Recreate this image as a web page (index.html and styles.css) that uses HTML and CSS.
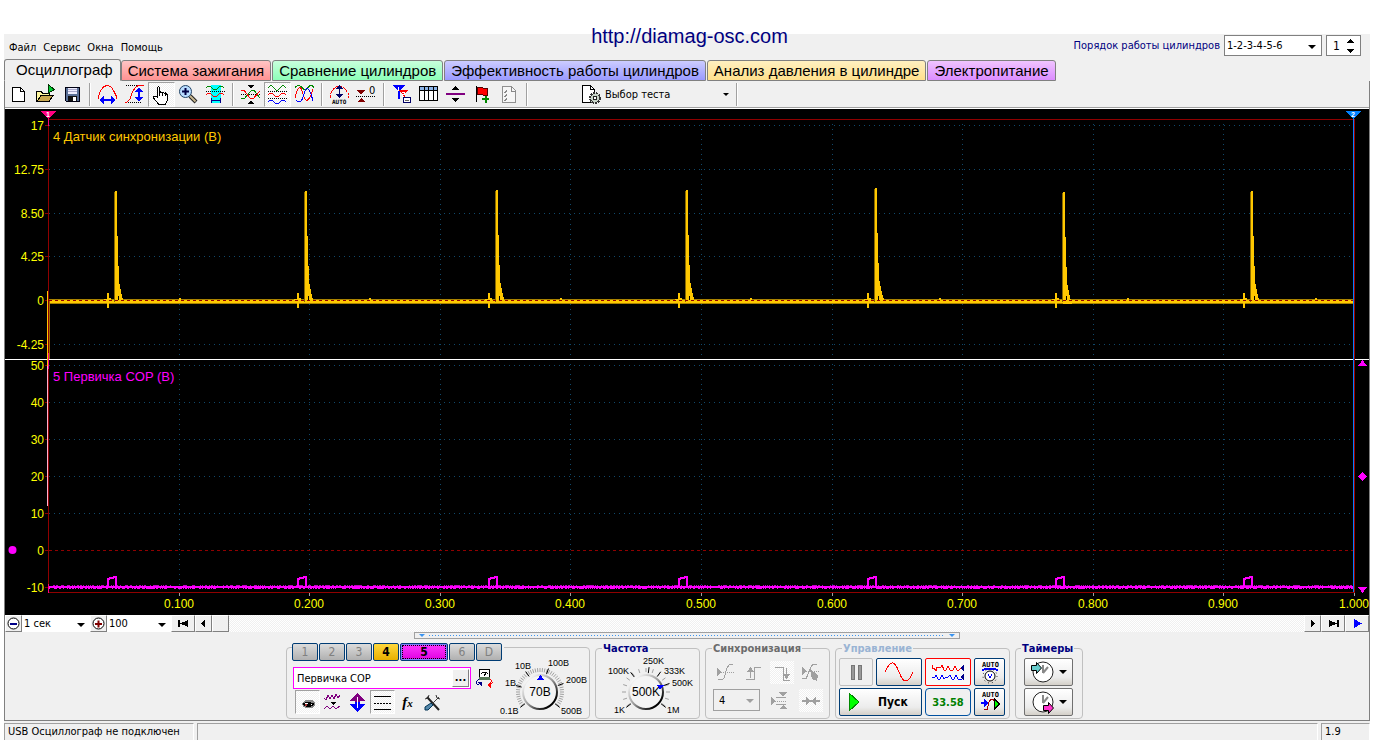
FILE: index.html
```html
<!DOCTYPE html>
<html lang="ru">
<head>
<meta charset="utf-8">
<title>USB Осциллограф</title>
<link rel="stylesheet" href="styles.css">
</head>
<body>
<div class="app">
  <header class="header">
    <nav class="menu">
      <button>Файл</button><button>Сервис</button><button>Окна</button><button>Помощь</button>
    </nav>
    <a class="site" href="http://diamag-osc.com">http://diamag-osc.com</a>
    <div class="order">
      <label for="order">Порядок работы цилиндров</label>
      <span class="combo order-combo"><select id="order"><option>1-2-3-4-5-6</option></select></span>
      <span class="spin"><input id="cyl" type="text" value="1" aria-label="Цилиндр"><svg width="8" height="14" viewBox="0 0 8 14"><path d="M0 4h8L4 0zM0 10h8l-4 4z"/></svg></span>
    </div>
  </header>

  <nav class="tabs">
    <button class="tab active">Осциллограф</button>
    <button class="tab red">Система зажигания</button>
    <button class="tab green">Сравнение цилиндров</button>
    <button class="tab blue">Эффективность работы цилиндров</button>
    <button class="tab yellow">Анализ давления в цилиндре</button>
    <button class="tab pink">Электропитание</button>
  </nav>

  <main class="frame">
    <div class="toolbar">
      <button class="tool" aria-label="Новый"><svg viewBox="0 0 21 21"><path d="M4.500 3.500h8l4 4v10h-12z" fill="#fff" stroke="#000"/><path d="M12.500 3.500v4h4" fill="none" stroke="#000"/></svg></button>
      <button class="tool" aria-label="Открыть"><svg viewBox="0 0 21 21"><path d="M1.500 17.500v-10h5l1 2h7v3" fill="#fdf6a0" stroke="#000"/><path d="M2 17.500l4-6h12l-4 6z" fill="#c8a850" stroke="#000"/><path d="M13.500 9V1l6 4.500z" fill="#0c3" stroke="#030"/></svg></button>
      <button class="tool" aria-label="Сохранить"><svg viewBox="0 0 21 21"><path d="M3.500 3.500h14v14h-13l-1-1z" fill="#5a7096" stroke="#001"/><path d="M6 4h9v6H6z" fill="#eef"/><path d="M6 5h9M6 7h9" stroke="#aac" stroke-width="1"/><path d="M6 12h9v5H6z" fill="#111"/><path d="M11 13h3v4h-3z" fill="#fff"/></svg></button>
      <span class="sep"></span>
      <button class="tool" aria-label="Период"><svg viewBox="0 0 21 21"><path d="M1.500 15v-3l2-5 3-4 3-1.500h2l3 2 2 3 2.500 5v3.500" fill="none" stroke="red"/><path d="M4 16h13" stroke="#00f" stroke-width="2"/><path d="M7 12v8l-5-4zM14 12v8l5-4z" fill="#00f"/></svg></button>
      <button class="tool" aria-label="Амплитуда"><svg viewBox="0 0 21 21"><path d="M2 1.500h18M2 18.500h16" stroke="#000" stroke-dasharray="1 1"/><path d="M1 18h2l3-3 2-6 3-5 3-2.500h6" fill="none" stroke="red"/><path d="M15 5v11" stroke="#00f" stroke-width="2"/><path d="M11 8h8l-4-5zM11 13h8l-4 5z" fill="#00f"/></svg></button>
      <button class="tool pressed" aria-label="Рука"><svg viewBox="0 0 21 21"><path d="M6.500 13V3.500l1-1 1 1V9l1-1 1.500 1 1-.5 1.500 1 1-.5 2 2v5l-2 4h-7l-5-6v-2h2z" fill="#fff" stroke="#000"/><path d="M8.500 9v3M11.500 9v3M14.500 10v2" stroke="#000"/></svg></button>
      <button class="tool" aria-label="Масштаб"><svg class="smooth" viewBox="0 0 21 21"><path d="M12 12l6 6" stroke="#222" stroke-width="4"/><path d="M12 12l5.500 5.500" stroke="#c8b890" stroke-width="2"/><circle cx="7.500" cy="7.500" r="6" fill="#b8dcff" stroke="#246"/><path d="M4 7.500h7M7.500 4v7" stroke="#004" stroke-width="2"/></svg></button>
      <button class="tool" aria-label="Участок"><svg viewBox="0 0 21 21"><path d="M6 1h10v18H6z" fill="#0ff"/><path d="M1 4q3-4 6 0t6 0 6 0" fill="none" stroke="#080"/><path d="M1 7.500h19" stroke="#000" stroke-dasharray="1 1"/><path d="M1 11q3-4 6 0t6 0 6 0" fill="none" stroke="red"/><path d="M6.500 14v5M15.500 14v5M7 16.500h8" stroke="#008"/></svg></button>
      <span class="sep"></span>
      <button class="tool" aria-label="Совместить"><svg viewBox="0 0 21 21"><path d="M7 1h7l-3.500 3.500zM7 20h7l-3.500-3.500z"/><path d="M1 10.500h19" stroke="#000" stroke-dasharray="1 1"/><path d="M1 14l3 1 7-8 3-1 6 8" fill="none" stroke="#080"/><path d="M1 7l3-1 6 8 3 1 7-8" fill="none" stroke="red"/></svg></button>
      <button class="tool pressed" aria-label="Раздельно"><svg viewBox="0 0 21 21"><path d="M1 4q3-5 6 0t6 0 6 0" fill="none" stroke="#080"/><path d="M1 7.500h19M1 14.500h19" stroke="#000" stroke-dasharray="1 1"/><path d="M1 11q3-4 6 0t6 0 6 0" fill="none" stroke="red"/><path d="M1 18q3-4 6 0t6 0 6 0" fill="none" stroke="#00f"/></svg></button>
      <button class="tool" aria-label="Наложить"><svg viewBox="0 0 21 21"><path d="M1 3.500q4-4 7 0t6 0 6 0" fill="none" stroke="#080"/><path d="M1 14c3-13 6-13 8-4s6 9 10-5" fill="none" stroke="red"/><path d="M2 16c3 4 6 2 8-6s5-9 9 7" fill="none" stroke="#00f"/></svg></button>
      <span class="sep"></span>
      <button class="tool" aria-label="Авто"><svg viewBox="0 0 21 21"><path d="M1.500 14v-4l3-5 4-3h4l4 3 3 5v4" fill="none" stroke="red" stroke-dasharray="3 1"/><path d="M10.500 3v9" stroke="#006" stroke-width="1"/><path d="M7 5h7l-3.500-4zM7 10h7l-3.500 4z" fill="#006"/><text x="3" y="20" class="tiny">AUTO</text></svg></button>
      <button class="tool" aria-label="Ноль"><svg viewBox="0 0 21 21"><path d="M1 6h8l-4 5zM1 18h8l-4-4z" fill="#800000"/><path d="M0 12.500h20" stroke="#000" stroke-dasharray="1 1"/><text x="13" y="10" class="digit">0</text></svg></button>
      <span class="sep"></span>
      <button class="tool" aria-label="Фильтр"><svg viewBox="0 0 21 21"><path d="M1 1h13L9 7v8H7V7z" fill="#00f"/><path d="M8 6h9l-3 4v6h-2v-5z" fill="red"/><path d="M7.500 3v4M11 8h2v2h-2v2h2" stroke="#fff" fill="none"/><path d="M12.500 13.500h7v5h-7z" fill="#fff" stroke="#006"/><path d="M14 16.500h4" stroke="#666"/></svg></button>
      <button class="tool" aria-label="Таблица"><svg viewBox="0 0 21 21"><path d="M1.500 2.500h18v14h-18z" fill="#fff" stroke="#000"/><path d="M2 3h17v3H2z" fill="#8cb4e8"/><path d="M1 6.500h19M6.500 3v13M10.500 3v13M15.500 3v13" stroke="#000"/></svg></button>
      <button class="tool" aria-label="Разделитель"><svg viewBox="0 0 21 21"><path d="M1 9h19v2H1z" fill="#800080"/><path d="M7 6h7l-3.500-4zM7 14h7l-3.500 4z"/></svg></button>
      <button class="tool" aria-label="Маркер"><svg viewBox="0 0 21 21"><path d="M4.500 2v16" stroke="#000"/><path d="M5 3h4l2 1h4v7h-4l-2-1H5z" fill="red" stroke="#500"/><path d="M10 15h7M13.500 12v7" stroke="#080" stroke-width="2"/></svg></button>
      <button class="tool" aria-label="Отчёт"><svg viewBox="0 0 21 21"><path d="M3.500 2.500h9l4 4v12h-13z" fill="#f6f6f6" stroke="#909090"/><path d="M5 8l1 1 2-3M5 12l1 1 2-3M5 16l1 1 2-3M12.500 3v4h4" stroke="#888" fill="none"/></svg></button>
      <span class="sep"></span>
      <button class="test">
        <svg viewBox="0 0 22 22"><path d="M2.500 1.500h8l4 4v13h-12z" fill="#fff" stroke="#000"/><path d="M10.500 1.500v4h4" fill="none" stroke="#000"/><circle cx="15" cy="14" r="5" fill="#c8d4c8" stroke="#333" stroke-width="2" stroke-dasharray="2 1"/><circle cx="15" cy="14" r="2" fill="#fff" stroke="#222"/></svg>
        <span>Выбор теста</span><i class="arrow"></i>
      </button>
      <span class="sep"></span>
    </div>

    <svg class="plot" viewBox="5 109 1364 506" role="img" aria-label="Осциллограммы">
      <g id="grid"></g>
      <path class="axis" d="M48.500 119v474M48 119.500h1307M1354.500 119v474M48 592.500h1307"/>
      <g id="traces"></g>
      <path class="zero" d="M49 300.500h1304M49 550.500h1304"/>
      <g id="labels"></g>
      <path class="divider" d="M5 359.500h1364"/>
      <path d="M1353.500 115v477" stroke="#0080ff"/>
      <path d="M1354.500 119v474" stroke="#a00000"/>
      <path d="M47.500 291v83" stroke="#ffc800"/><path d="M47.500 366v140" stroke="#ffb0d0"/>
      <path d="M48.500 115v11M48.500 353v16M48.500 584v9" stroke="#ff0080"/>
      <path d="M41 111h15l-7.500 8z" fill="#ff0080"/><path d="M1346 111h15l-7.500 8z" fill="#0080ff"/>
      <text class="flag" x="48" y="117">1</text><text class="flag" x="1353" y="117">2</text>
      <text class="name yellow-text" x="53" y="141">4 Датчик синхронизации (В)</text>
      <text class="name pink-text" x="53" y="381">5 Первичка COP (В)</text>
      <g fill="#f0f"><circle class="smooth" cx="12.500" cy="550" r="4"/><path d="M1358 366h9l-4.500-6zM1358 587h9l-4.500 6zM1358 476.500l4.500-4.500 4.500 4.500-4.500 4.500z"/></g>
    </svg>

    <div class="scroll">
      <button class="flat w17" aria-label="Меньше"><svg class="smooth" viewBox="0 0 13 13"><circle cx="6.500" cy="6.500" r="5.500" fill="#fff" stroke="#000"/><path d="M3 6h7v2H3z" fill="#008"/></svg></button>
      <span class="combo time"><select aria-label="Развёртка"><option>1 сек</option></select></span>
      <button class="flat w17" aria-label="Больше"><svg class="smooth" viewBox="0 0 13 13"><circle cx="6.500" cy="6.500" r="5.500" fill="#fff" stroke="#000"/><path d="M3 6h7v2H3zM5.500 3.500h2v7h-2z" fill="#800000"/></svg></button>
      <span class="combo scale"><select aria-label="Масштаб"><option>100</option></select></span>
      <button class="flat w24" aria-label="В начало"><svg viewBox="0 0 13 13"><path d="M1 3h2v7H1zM11 3v7L3 6.500z"/></svg></button>
      <button class="flat w17" aria-label="Назад"><svg viewBox="0 0 13 13"><path d="M8 3v7L4 6.500z"/></svg></button>
      <div class="track"><span class="thumb"></span></div>
      <button class="flat w17" aria-label="Вперёд"><svg viewBox="0 0 13 13"><path d="M5 3v7l4-3.500z"/></svg></button>
      <button class="flat w24" aria-label="В конец"><svg viewBox="0 0 13 13"><path d="M10 3h2v7h-2zM2 3v7l8-3.500z"/></svg></button>
      <button class="flat w24" aria-label="Воспроизвести"><svg viewBox="0 0 13 13"><path d="M3 2v9l8-4.500z" fill="#00f"/></svg></button>
    </div>

    <section class="controls">
      <div class="splitter"><i></i><span></span><i></i></div>
      <div class="groups">
        <div class="group channel">
          <div class="left">
            <div class="channels">
              <button>1</button><button>2</button><button>3</button><button class="c4">4</button><button class="c5">5</button><button>6</button><button>D</button>
            </div>
            <div class="row name-row">
              <span class="name-box"><input type="text" value="Первичка COP" aria-label="Имя канала"><button>...</button></span>
              <svg width="20" height="20" viewBox="0 0 20 20"><path d="M4.500 1.500h10v8h-10z" fill="#fff" stroke="#000"/><path d="M4 9h11v3H4z" fill="#575"/><path d="M6 6l2-2h3l2 2M9 8l2-3" stroke="#000" fill="none"/><path d="M4 11q-5 4 0 6" stroke="#008" fill="none"/><path d="M15 11q5 4-1 6" stroke="red" fill="none"/><path d="M3 14h4v5z" fill="#008"/><path d="M16 14l-4 3 4 3z" fill="red"/></svg>
            </div>
            <div class="row tools">
              <button class="tool pressed" aria-label="Показать"><svg viewBox="0 0 21 21"><path d="M5 11l4-3h6l3 3v3l-3 2H9l-3-1z" fill="#888"/><path d="M6 12q5-3 11 0-4 4-8 2z" fill="#fff" stroke="#000"/><circle cx="12" cy="13" r="2"/><circle cx="9" cy="13" r="1" fill="#a33"/></svg></button>
              <button class="tool" aria-label="Фильтр"><svg viewBox="0 0 21 21"><path d="M2 6l2 2 2-5 2 4 2-4 2 4 2-5 2 4 2-3" stroke="#800080" fill="none"/><path d="M8 10h6l-3 3z"/><path d="M2 17l3-3 3 3 3-3 3 3 4-3" stroke="#800080" fill="none"/></svg></button>
              <button class="tool" aria-label="Смещение"><svg viewBox="0 0 21 21"><path d="M3 9l7.500-8L18 9h-5v2H8V9z" fill="#800080"/><path d="M3 12l7.500 8 7.500-8h-5v-2H8v2z" fill="#00f"/><path d="M10.500 5v11" stroke="#fff"/></svg></button>
              <button class="tool pressed" aria-label="Линии"><svg viewBox="0 0 21 21"><path d="M2 4.500h17M2 17.500h17" stroke="#000"/><path d="M2 11.500h17" stroke="#000" stroke-dasharray="2 1"/></svg></button>
              <button class="tool fx" aria-label="Функция"><i>f<small>x</small></i></button>
              <button class="tool" aria-label="Настройка"><svg class="smooth" viewBox="0 0 21 21"><path d="M5 5l12 13" stroke="#222" stroke-width="2"/><path d="M17 5l-8 8" stroke="#444" stroke-width="1"/><path d="M3 7l3-1 1-3M14 3l1 3 3 1" stroke="#333" fill="none"/><path d="M9 11l2 2-5 5H3v-3z" fill="#58a" stroke="#035"/></svg></button>
            </div>
          </div>
          <svg class="dial" id="volts" width="94" height="66" viewBox="497 652 94 66" role="slider" aria-label="Диапазон" aria-valuenow="70"></svg>
        </div>

        <fieldset class="group freq"><legend>Частота</legend>
          <svg class="dial" id="freq" width="98" height="64" viewBox="598 652 98 64" role="slider" aria-label="Частота" aria-valuenow="500"></svg>
        </fieldset>

        <fieldset class="group sync"><legend class="gray">Синхронизация</legend>
          <div class="sync-row">
            <button class="tool" disabled aria-label="Уровень"><svg viewBox="0 0 21 21" class="dim"><path d="M2 6l5 4-5 4z" class="fill"/><path d="M6 10.500h14" stroke-dasharray="1 1"/><path d="M3 17l4 1 2-2 3-10 2-3 4-1"/></svg></button>
            <button class="tool" disabled aria-label="Фронт"><svg viewBox="0 0 21 21" class="dim"><path d="M3 17.500h8v-12h7M7.500 16V8"/><path d="M4 10h7L7.500 5z" class="fill"/></svg></button>
            <button class="tool checked" disabled aria-label="Спад"><svg viewBox="0 0 21 21" class="dim"><path d="M3 5.500h8v13h7M14.500 6v9"/><path d="M11 12h7l-3.500 5z" class="fill"/></svg></button>
            <button class="tool" disabled aria-label="Ручной"><svg viewBox="0 0 21 21" class="dim"><path d="M2 5l5 4-5 4z" class="fill"/><path d="M6 9.500h14" stroke-dasharray="1 1"/><path d="M2 16l4 1 4-10 3-5h4"/><path d="M10 7l8 6-1 6-5-2z" class="fill"/></svg></button>
          </div>
          <div class="sync-row">
            <span class="combo disabled"><select disabled aria-label="Канал синхронизации"><option>4</option></select></span>
            <button class="tool" disabled aria-label="Окно"><svg viewBox="0 0 21 21" class="dim"><path d="M2 7l5 4-5 4zM10 2h8l-4 5zM10 19h8l-4-4z" class="fill"/><path d="M7 7.500h10M7 14.500h10"/><path d="M6 11.500h12" stroke-dasharray="1 1"/></svg></button>
            <button class="tool checked" disabled aria-label="Центр"><svg viewBox="0 0 21 21" class="dim"><path d="M1 11h18" stroke-width="2"/><path d="M5 7l5 4-5 4zM15 7l-5 4 5 4z" class="fill"/></svg></button>
          </div>
        </fieldset>

        <fieldset class="group run"><legend class="pale">Управление</legend>
          <div class="run-grid">
            <button class="push off" disabled aria-label="Пауза"><svg width="14" height="16" viewBox="0 0 14 16"><path d="M2 1h3v14H2zM9 1h3v14H9z" fill="#999" stroke="#777"/></svg></button>
            <button class="push" aria-label="Синус"><svg width="32" height="22" viewBox="0 0 32 22"><path d="M2 11C8-2 12 0 16 11s9 13 14 0" fill="none" stroke="red"/></svg></button>
            <button class="push alert" aria-label="Непрерывно"><svg width="36" height="22" viewBox="0 0 36 22"><path d="M2 4v3h2l2 3 1-4h4l1-2 2 5h2l2-4 2 4h3l2-4 2 4h2l2-2" fill="none" stroke="red"/><path d="M2 16h3l1-2 2 4h2l2-4 2 4 2-2h2l2-2 2 4h2l2-4 2 4h4" fill="none" stroke="#00f"/><path d="M34 4v6l-4-3zM34 13v6l-4-3z" fill="#008"/></svg></button>
            <button class="push" aria-label="Авто"><svg width="26" height="24" viewBox="0 0 26 24"><text x="5" y="7" class="tiny auto">AUTO</text><path d="M5 10q8-3 16 0" stroke="#00f" stroke-width="2" fill="none"/><g class="smooth"><circle cx="13" cy="16" r="5" fill="#fff" stroke="#000"/><circle cx="13" cy="16" r="7" fill="none" stroke="#222" stroke-dasharray="1 3"/></g><path d="M11 14l2 4 2-4" fill="none" stroke="#00f"/></svg></button>
            <button class="push start"><svg width="12" height="20" viewBox="0 0 12 20"><path d="M1 1v18l10-9z" fill="#0f0" stroke="#080"/></svg><span>Пуск</span></button>
            <output class="push value">33.58</output>
            <button class="push" aria-label="Авто запуск"><svg width="26" height="24" viewBox="0 0 26 24"><text x="5" y="7" class="tiny auto">AUTO</text><path d="M4 12h3V9l4 4-4 4v-3H4z" fill="#00f"/><path d="M7 19q4 3 4-3t5-7l2 3" fill="none" stroke="#a00000"/><path d="M17.500 9v10l5-5z" fill="#0f0" stroke="#000"/></svg></button>
          </div>
        </fieldset>

        <fieldset class="group timers"><legend>Таймеры</legend>
          <div class="timer-grid">
            <button class="push gray-push" aria-label="Таймер запуска"><svg class="smooth" width="26" height="24" viewBox="0 0 26 24"><circle cx="13" cy="12" r="10" fill="#fff" stroke="#222"/><path d="M13 13V5M13 13l5-6" stroke="#888" stroke-width="2"/><path d="M1.500 5.500h5v-3l5 5.500-5 5.500v-3h-5z" fill="#6cc" stroke="#000"/></svg><i class="arrow"></i></button>
            <button class="push gray-push" aria-label="Таймер остановки"><svg class="smooth" width="26" height="24" viewBox="0 0 26 24"><circle cx="13" cy="12" r="10" fill="#fff" stroke="#222"/><path d="M13 13V5M13 13l5-6" stroke="#888" stroke-width="2"/><path d="M13.500 15.500h5v-3l5 5.500-5 5.500v-3h-5z" fill="#f3c" stroke="#000"/></svg><i class="arrow"></i></button>
          </div>
        </fieldset>
      </div>
    </section>
  </main>

  <footer class="status"><span class="usb">USB Осциллограф не подключен</span><span class="fill-cell"></span><span class="ver">1.9</span></footer>
</div>
<script src="plot.js"></script>
</body>
</html>
```

FILE: styles.css
```css
* { box-sizing: border-box; }
body { margin: 0; background: #fff; font: 11px "DejaVu Sans Condensed", "DejaVu Sans", sans-serif; color: #000; }
button, input, select { font: inherit; color: inherit; margin: 0; padding: 0; border: 0; border-radius: 0; background: none; }
svg { display: block; shape-rendering: crispEdges; }
.smooth { shape-rendering: auto; }
.app { margin: 0 12px 0 4px; min-width: 1060px; }

.header { display: grid; grid-template-columns: 1fr auto 1fr; height: 59px; background: linear-gradient(#fff 34px, #f0f0f0 34px); }
.menu { display: flex; gap: 7px; padding: 40px 0 0 5px; align-items: flex-start; }
.menu button { line-height: 15px; }
.site { padding: 24px 0 0 5px; font: 20px/24px "Liberation Sans", Arial, sans-serif; color: #000080; text-decoration: none; }
.order { display: flex; justify-content: flex-end; align-items: flex-start; gap: 4px; padding: 35px 9px 0 0; color: #000080; }
.order label { line-height: 22px; }

.combo { position: relative; display: flex; color: #000; }
.combo select { width: 100%; appearance: none; outline: 0; padding: 0 16px 0 2px; font-size: 11px; }
.combo::after { content: ""; position: absolute; right: 5px; top: 50%; margin-top: -1px; border: 4px solid transparent; border-top-color: #000; border-bottom: 0; }
.order-combo { width: 98px; height: 21px; background: #fff; border: 1px solid #808080; }
.spin { display: flex; align-items: center; width: 35px; height: 21px; background: #fff; border: 1px solid #808080; color: #000; }
.spin input { width: 19px; padding-left: 6px; font-size: 12px; }

.tabs { display: flex; align-items: flex-end; gap: 1px; height: 22px; margin-bottom: -1px; background: #f0f0f0; position: relative; }
.tab { height: 21px; padding: 0 6px; border: 1px solid #808080; border-radius: 3px 3px 0 0; font: 15px/20px "Liberation Sans", Arial, sans-serif; white-space: nowrap; }
.tab.active { height: 22px; margin-right: -1px; padding: 0 7px 0 11px; background: #f0f0f0; border-bottom-color: #f0f0f0; }
.tab.red { background: linear-gradient(#ffc4c4, #ff9292); }
.tab.green { background: linear-gradient(#c8ffdc, #8cffb8); }
.tab.blue { background: linear-gradient(#ccccff, #9a9aff); }
.tab.yellow { background: linear-gradient(#fff0c0, #ffe08c); }
.tab.pink { background: linear-gradient(#f0c4ff, #dc8cff); }

.frame { border: 1px solid #808080; background: #f0f0f0; }
.toolbar { display: flex; height: 28px; padding: 1px 0; border-bottom: 1px solid #fff; box-shadow: inset 0 -1px #a0a0a0; }
.tool { width: 27px; height: 25px; display: grid; place-items: center; border: 1px solid transparent; }
.tool svg { width: 21px; height: 21px; }
.pressed { border-color: #a0a0a0 #fff #fff #a0a0a0; background: repeating-conic-gradient(#fff 0 25%, #f0f0f0 0 50%) 0 0 / 2px 2px; }
.sep { width: 8px; height: 23px; border-left: 1px solid #a0a0a0; box-shadow: inset 1px 0 #fff; margin: 1px -3px 1px 3px; }
.test { display: flex; align-items: center; width: 153px; margin-left: 49px; }
.test svg { width: 22px; height: 22px; margin-right: 3px; }
.arrow { width: 0; height: 0; margin-left: auto; border: 4px solid transparent; border-top-color: #000; border-bottom: 0; }
.test .arrow { margin-right: 4px; border-width: 3px; border-bottom: 0; }
.tiny { font: bold 6px "DejaVu Sans Mono", monospace; }
.auto { font-size: 7px; }
.digit { font: 11px "DejaVu Sans Condensed", sans-serif; }

.plot { width: 100%; height: auto; background: #000; }
.plot text { font-family: "Liberation Sans", Arial, sans-serif; }
.dot { stroke: #10486a; stroke-dasharray: 1 4; fill: none; }
.axis { stroke: #900000; fill: none; }
.tick { stroke: #a0a0a0; }
.zero { stroke: #900000; stroke-dasharray: 3 3; fill: none; }
.divider { stroke: #fff; }
.lbl { font-size: 12px; fill: #ff0; }
.lbl.y { text-anchor: end; }
.lbl.x { text-anchor: middle; }
.name { font-size: 13px; }
.yellow-text { fill: #ffc800; }
.pink-text { fill: #f0f; }
.flag { font-size: 7px; font-weight: bold; fill: #fff; text-anchor: middle; }

.scroll { display: flex; height: 17px; background: #fff; }
.flat { height: 17px; display: grid; place-items: center; background: #f0f0f0; border: 1px solid; border-color: #fff #808080 #808080 #fff; flex: none; }
.flat svg { width: 13px; height: 13px; }
.w17 { width: 17px; }
.w24 { width: 24px; }
.time { width: 68px; }
.scale { width: 64px; }
.track { flex: 1; background: repeating-conic-gradient(#fff 0 25%, #f0f0f0 0 50%) 0 0 / 2px 2px; }
.thumb { display: block; width: 17px; height: 17px; background: #f0f0f0; border: 1px solid; border-color: #fff #808080 #808080 #fff; }

.controls { padding-bottom: 1px; }
.splitter { display: flex; align-items: center; gap: 4px; width: 546px; height: 7px; margin: 0 auto; padding: 0 4px; border: 1px solid #a0a0a0; }
.splitter i { border: 3px solid transparent; border-top-color: #3a94f0; border-bottom: 0; }
.splitter span { flex: 1; height: 1px; background: repeating-linear-gradient(90deg, #3a94f0 0 1px, transparent 1px 3px); }
.groups { display: flex; justify-content: center; align-items: flex-end; gap: 5px; margin: 3px 5px 0 0; }
.group { height: 77px; margin: 0; padding: 4px 3px 0; border: 1px solid #c0c0c0; border-radius: 4px; min-width: 0; }
legend { margin-left: 3px; padding: 0 1px; font-weight: bold; line-height: 14px; height: 12px; color: #000080; }
legend.gray { color: #6c6c6c; }
legend.pale { color: #9ab4d4; }
.channel { height: 72px; width: 304px; display: flex; padding: 0; }
.left { width: 217px; margin-top: -5px; padding-left: 5px; flex: none; }
.channels { display: flex; gap: 1px; width: 212px; background: #f0f0f0; }
.channels button { width: 26px; height: 18px; border: 1px solid #003c74; border-radius: 2px; background: linear-gradient(#dcdcdc, #b0b0b0); color: #808080; font-size: 12px; flex: none; }
.channels .c4 { background: linear-gradient(#ffd83c, #e8b000); color: #000; font-weight: bold; }
.channels .c5 { width: 48px; background: linear-gradient(#ff38ff, #e000e0); color: #000; font-weight: bold; box-shadow: inset 0 0 0 1px #8080ff; outline: 1px dotted #000; outline-offset: -3px; }
.row { display: flex; }
.name-row { margin: 6px 0 1px 1px; gap: 4px; align-items: center; }
.name-box { display: flex; width: 178px; height: 22px; border: 1px solid #f0f; background: #fff; padding: 1px; }
.name-box input { flex: 1; min-width: 0; padding-left: 2px; }
.name-box button { width: 17px; background: #f0f0f0; border: 1px solid; border-color: #fff #808080 #808080 #fff; line-height: 10px; font-weight: bold; }
.tools { margin-left: 3px; }
.tools .tool { width: 25px; height: 24px; }
.fx i { font: italic bold 15px/16px "Liberation Serif", serif; }
.fx small { font-size: 11px; }
.dial { flex: none; }
.channel .dial { margin: 4px 0 0 -8px; }
.freq { width: 105px; padding-top: 0; }
.freq .dial { margin-top: -2px; }
.dial text { font: 9px "Liberation Sans", Arial, sans-serif; }
.dial .num { font: 12px "Liberation Sans", Arial, sans-serif; text-anchor: middle; }
.dial circle, .dial line { shape-rendering: auto; }

.sync { width: 125px; }
.sync-row { display: flex; align-items: center; justify-content: space-between; height: 28px; padding: 0 3px 0 4px; }
.sync-row .tool { width: 24px; height: 23px; }
.dim path { stroke: #a0a0a0; fill: none; }
.dim .fill { fill: #a0a0a0; stroke: none; }
.checked { background: repeating-conic-gradient(#fff 0 25%, #f0f0f0 0 50%) 0 0 / 2px 2px; }
.disabled { width: 47px; height: 22px; border: 1px solid #a0a0a0; }
.disabled select { padding-left: 5px; color: #000; opacity: 1; }
.disabled::after { border-top-color: #a0a0a0; }

.run { width: 175px; }
.run-grid { display: grid; grid-template-columns: 34px 46px 46px 31px; grid-auto-rows: 28px; gap: 2px 3px; }
.push { display: flex; align-items: center; justify-content: center; border: 1px solid #003c74; border-radius: 2px; background: linear-gradient(#fff, #ececec 70%, #d4d0c8); }
.push.off { border-color: #c0c0c0; background: #f0f0f0; }
.push.alert { border-color: #f00; background: #f8f8f8; }
.push.start { grid-column: span 2; justify-content: flex-start; padding-left: 8px; gap: 18px; font-weight: bold; font-size: 12px; }
.push.value { border-color: #0050a0; border-radius: 4px; background: #f0f0f0; color: #008000; font: bold 11px "DejaVu Sans Condensed", sans-serif; }
.timers { width: 68px; padding-left: 8px; }
.timers legend { margin-left: -3px; }
.timer-grid { display: grid; gap: 2px; grid-auto-rows: 28px; width: 49px; }
.gray-push { justify-content: flex-start; padding: 0 5px; border-color: #707070; }

.status { display: flex; gap: 3px; padding-top: 2px; background: #f0f0f0; }
.status span { height: 17px; padding-left: 3px; line-height: 16px; border-top: 1px solid #a0a0a0; border-left: 1px solid #a0a0a0; border-right: 1px solid #fff; white-space: nowrap; }
.usb { width: 190px; }
.fill-cell { flex: 1; }
.ver { width: 49px; }
```

FILE: plot.js
```js
(function () {
  var NS = "http://www.w3.org/2000/svg";

  function add(parent, tag, attrs, text) {
    var el = document.createElementNS(NS, tag);
    for (var k in attrs) el.setAttribute(k, attrs[k]);
    if (text) el.textContent = text;
    parent.appendChild(el);
    return el;
  }

  var grid = document.getElementById("grid");
  var labels = document.getElementById("labels");
  var traces = document.getElementById("traces");

  // Value axes of both channels
  var rows = [
    [125, "17"], [169, "12.75"], [213, "8.50"], [256, "4.25"], [300, "0"], [344, "-4.25"],
    [365, "50"], [402, "40"], [439, "30"], [476, "20"], [513, "10"], [550, "0"], [587, "-10"]
  ];
  rows.forEach(function (r) {
    if (r[1] !== "0") add(grid, "path", { "class": "dot", d: "M49 " + (r[0] + 0.5) + "H1353" });
    add(grid, "path", { "class": "axis", d: "M45 " + (r[0] + 0.5) + "h4" });
    add(labels, "text", { "class": "lbl y", x: 44, y: r[0] + 5 }, r[1]);
  });

  // Time axis
  [179, 309, 440, 570, 701, 832, 962, 1093, 1223, 1354].forEach(function (x, i) {
    if (i < 9) add(grid, "path", { "class": "dot", d: "M" + (x + 0.5) + " 124V592" });
    add(grid, "path", { "class": "tick", d: "M" + (x + 0.5) + " 593v3" });
    add(labels, "text", { "class": "lbl x", x: x, y: 608 }, ((i + 1) / 10).toFixed(3));
  });

  var spikes = [[116, 191], [306, 191], [497, 190], [687, 190], [876, 188], [1064, 192], [1252, 191]];

  // Sync sensor
  add(traces, "path", { d: "M49 299H1353V304H49z", fill: "#a88200" });
  add(traces, "path", { d: "M49 300H1353V303H49z", fill: "#ffc800" });
  add(traces, "path", { d: "M49.500 300V359", stroke: "#a07000" });
  spikes.forEach(function (s) {
    var x = s[0], t = s[1];
    add(traces, "path", { d: "M" + (x - 1.5) + " " + (t + 1) + "V302", stroke: "#8a6a00" });
    add(traces, "path", {
      fill: "#ffc800",
      d: "M" + (x - 1) + " " + t + "h2v45h1v30h1v18h1v5h1v5h1v4h1v3h1v2h-9z" +
         "M" + (x - 9) + " 293h2v5h2v2h2v3h-4v5h-2v-5h-3v-4h3z" +
         "M" + (x + 63) + " 298h2v2h-2z"
    });
    add(traces, "path", { d: "M" + (x + 2.5) + " 296v4", stroke: "#000" });
  });

  // Primary circuit: noisy base line with a short pulse before every spike
  var seed = 7;
  function rnd() { seed = (seed * 1103515245 + 12345) % 2147483648; return seed / 2147483648; }
  var above = "", below = "";
  for (var x = 49; x < 1353; x += 1) {
    if (rnd() < 0.5) above += "M" + (x + 0.5) + " 585v1";
    if (rnd() < 0.5) below += "M" + (x + 0.5) + " 588v1";
  }
  add(traces, "path", { d: "M49 586H1353V588H49z", fill: "#f0f" });
  add(traces, "path", { d: above, stroke: "#c000c0" });
  add(traces, "path", { d: below, stroke: "#f0f" });
  spikes.forEach(function (s) {
    var x = s[0];
    add(traces, "path", {
      d: "M" + (x - 8) + " 588v-9l3-1 5-1v11", fill: "none", stroke: "#f0f", "stroke-width": 2
    });
  });

  // Rotary knobs
  function dial(id, cx, cy, r, value, pointer, minor, marks) {
    var g = document.getElementById(id);
    var defs = add(g, "defs", {});
    var lg = add(defs, "linearGradient", { id: id + "-rim", x1: 0, y1: 0, x2: 1, y2: 1 });
    add(lg, "stop", { offset: "0.1", "stop-color": "#fff" });
    add(lg, "stop", { offset: "0.5", "stop-color": "#999" });
    add(lg, "stop", { offset: "0.85", "stop-color": "#000" });
    function ray(a, r1, r2, color) {
      var k = a * Math.PI / 180;
      add(g, "line", {
        x1: cx + r1 * Math.sin(k), y1: cy - r1 * Math.cos(k),
        x2: cx + r2 * Math.sin(k), y2: cy - r2 * Math.cos(k), stroke: color
      });
    }
    for (var a = -126; a <= 126; a += minor) ray(a, r + 2, r + 6, "#a0a0a0");
    marks.forEach(function (m) {
      ray(m[0], r + 1, r + 7, "#000");
      add(g, "text", { x: m[2], y: m[3] }, m[1]);
    });
    add(g, "circle", { cx: cx, cy: cy, r: r - 1, fill: "#f4f4f4", stroke: "url(#" + id + "-rim)", "stroke-width": 2 });
    add(g, "path", { d: pointer, fill: "#00f" });
    add(g, "text", { "class": "num", x: cx, y: cy + 4 }, value);
  }
  dial("volts", 541, 692, 18, "70В", "M538 680h7l-3.500-5z", 6, [
    [-128, "0.1В", 501, 714], [-75, "1В", 506, 686], [-35, "10В", 516, 669],
    [20, "100В", 549, 666], [70, "200В", 567, 683], [128, "500В", 562, 714]
  ]);
  dial("freq", 645, 692, 18, "500K", "M656 685h7l-4 5z", 18, [
    [-128, "1K", 613, 713], [-38, "100K", 607, 674], [7, "250K", 642, 664],
    [36, "333K", 663, 674], [70, "500K", 671, 686], [128, "1M", 666, 713]
  ]);
})();
```
